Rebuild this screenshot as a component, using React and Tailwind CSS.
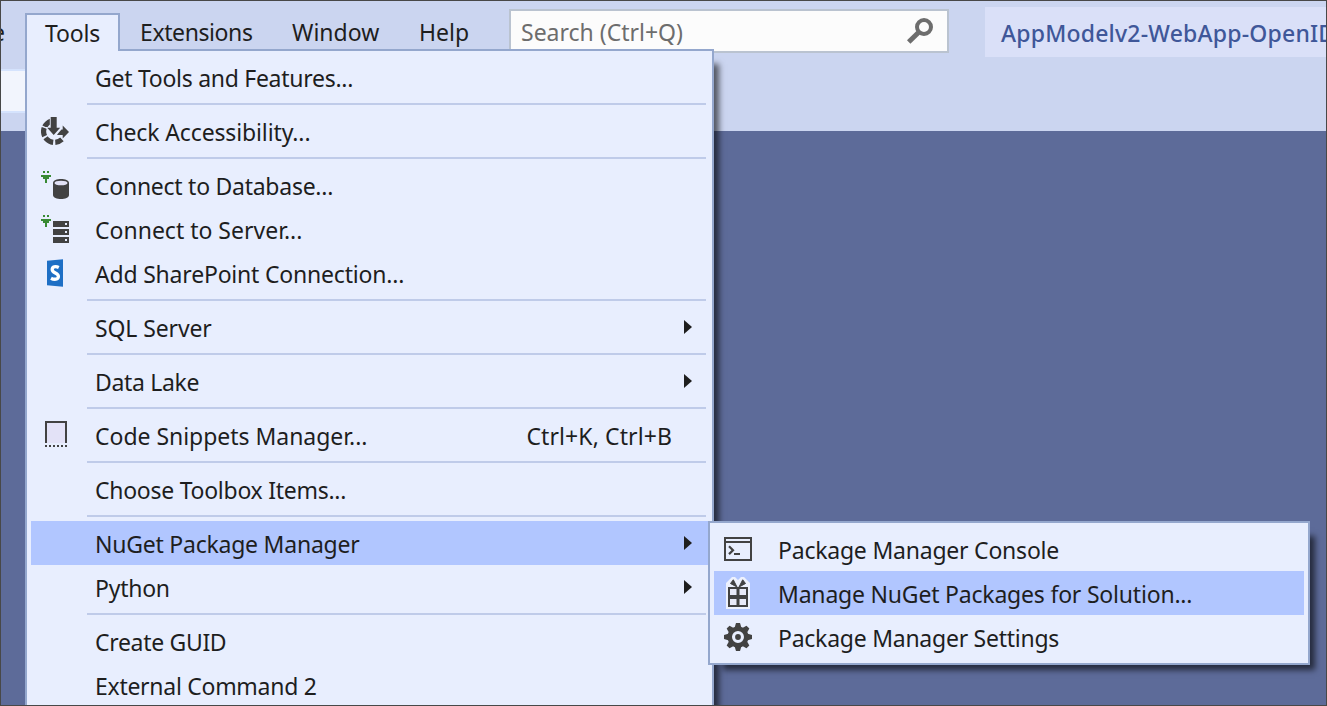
function Separator() {
  return <div className="ml-14 mr-0.5 my-1 h-0.5 shrink-0 bg-[#bfcbe9]" />;
}

function AccessibilityIcon() {
  return (
    <svg width="28" height="28" viewBox="0 0 28 28" fill="none">
      <circle cx="13.500" cy="14.500" r="10.900" stroke="#424242" strokeWidth="5.200" pathLength="360" strokeDasharray="39 11 48 10 44 7 44 157" transform="rotate(47 13.500 14.500)" />
      <path d="M17 16.500l3.500-4h1.200V8.500L28 15l-6.300 6.500V18H16z" fill="#424242" />
      <path d="M9.700 0h6v10.800h3.500L12.700 18 6.200 10.800h3.500z" fill="#424242" stroke="#e8eefe" strokeWidth="1.800" paintOrder="stroke" />
    </svg>
  );
}

function PlugMark() {
  return <path d="M2 0h2v2H2zM6 0h2v2H6zM0 4h10v2H8v2H6v4H4V8H2V6H0z" fill="#388a34" shapeRendering="crispEdges" />;
}

function DatabaseIcon() {
  return (
    <svg width="28" height="28" viewBox="0 0 28 28">
      <PlugMark />
      <path d="M12 12c0-5.300 16-5.300 16 0v12c0 5.300-16 5.300-16 0z" fill="#424242" />
      <ellipse cx="20" cy="12" rx="6.500" ry="2.300" fill="#e2e2f6" />
    </svg>
  );
}

function ServerIcon() {
  return (
    <svg width="28" height="28" viewBox="0 0 28 28" shapeRendering="crispEdges">
      <PlugMark />
      <path d="M12 6h16v6H12zM12 14h16v6H12zM12 22h16v6H12z" fill="#424242" />
      <path d="M24 8h2v2h-2zM24 16h2v2h-2zM24 24h2v2h-2z" fill="#e8eefe" />
    </svg>
  );
}

function SharePointIcon() {
  return (
    <svg width="28" height="28" viewBox="0 0 28 28">
      <path d="M6 1.800L22 .3v27.400L6 26.200z" fill="#1e6fc5" />
      <path d="M17.800 8.600c-3.400-1.700-6.600-.8-6.600 1.900 0 3.700 6.200 3.400 6.200 7 0 3-4.200 3.500-7.400 1.700" fill="none" stroke="#fff" strokeWidth="3.300" />
    </svg>
  );
}

function SnippetIcon() {
  return (
    <svg width="28" height="28" viewBox="0 0 28 28" shapeRendering="crispEdges">
      <path d="M6 2h18v20H6z" fill="#e3e2f7" />
      <path d="M4 0h22v22h-2V2H6v20H4z" fill="#424242" />
      <path d="M4 25h22" stroke="#424242" strokeWidth="2" strokeDasharray="2 2" />
    </svg>
  );
}

function ConsoleIcon() {
  return (
    <svg width="28" height="28" viewBox="0 0 28 28">
      <path d="M0 2h28v24H0zM2 4v2h24V4zM2 8v16h24V8z" fill="#424242" fillRule="evenodd" />
      <path d="M5 11.300l4 3.900-4 3.900" fill="none" stroke="#424242" strokeWidth="2.200" />
      <path d="M10 18h6v2h-6z" fill="#424242" />
    </svg>
  );
}

function GiftIcon() {
  return (
    <svg width="28" height="32" viewBox="0 0 28 32">
      <path d="M2 9V6l6-6h3l3 3 3-3h3l6 6v26H2z" fill="#edf1fd" />
      <path d="M4 10h20v20H4z" fill="#424242" />
      <path d="M6 12h6.500v6H6zM15.500 12H22v6h-6.500zM6 22h6.500v6H6zM15.500 22H22v6h-6.500z" fill="#e8eaf8" />
      <path d="M13 10L9.300 2.800 6.500 6.500zM15 10l3.700-7.200 2.800 3.700z" fill="#424242" stroke="#424242" />
    </svg>
  );
}

function GearIcon() {
  return (
    <svg width="28" height="28" viewBox="0 0 28 28" fill="#424242">
      <g transform="translate(14 14)">
        <path fillRule="evenodd" d="M0-10.500A10.500 10.500 0 1 1 0 10.500 10.500 10.500 0 1 1 0-10.500zM0-6A6 6 0 1 0 0 6 6 6 0 1 0 0-6z" />
        <circle r="2.900" />
        {[0, 45, 90, 135, 180, 225, 270, 315].map((a) => (
          <path key={a} d="M-3.500-9l1.500-5h4l1.500 5z" transform={`rotate(${a})`} />
        ))}
      </g>
    </svg>
  );
}

function SearchIcon() {
  return (
    <svg width="26" height="26" viewBox="0 0 26 26" fill="none" stroke="#6d6d6d">
      <circle cx="17" cy="9" r="7" strokeWidth="4" />
      <path d="M12 14L1.700 24" strokeWidth="5" />
    </svg>
  );
}

function MenuItem({ icon, label, tracking = "", shortcut, arrow, active }) {
  return (
    <div className={`flex h-11 shrink-0 items-center ${active ? "bg-[#b1c6ff]" : ""}`}>
      <div className="flex w-12 shrink-0 justify-center">{icon}</div>
      <span className={`ml-4 flex-1 pt-0.5 ${tracking}`}>{label}</span>
      {shortcut && <span className="mr-9 pt-0.5 tracking-[0.1px]">{shortcut}</span>}
      {arrow && (
        <svg className="mr-4 shrink-0" width="8" height="14" viewBox="0 0 8 14">
          <path d="M0 0l8 7-8 7z" fill="#1e1e1e" />
        </svg>
      )}
    </div>
  );
}

function Header() {
  return (
    <header className="h-[131px] bg-[#cbd5f0]">
      <div className="flex h-16 items-center">
        <div className="flex w-[25px] shrink-0">
          <span className="flex w-[5px] justify-end overflow-hidden">e</span>
        </div>
        <div className="relative z-10 flex h-[38px] w-[95px] shrink-0 items-center border-2 border-b-0 border-[#94a7cd] bg-[#e8eefe] pl-[18px] tracking-[-0.2px]">Tools</div>
        <span className="ml-5 w-[152px] shrink-0 tracking-[-0.4px]">Extensions</span>
        <span className="w-[127px] shrink-0">Window</span>
        <span className="w-[90px] shrink-0">Help</span>
        <div className="mb-0.5 flex h-11 w-[440px] shrink-0 items-center justify-between border-2 border-[#bac3d0] bg-[#fcfcfc] pl-2.5 pr-3.5 text-[#6d6d6d]">
          <span className="pt-0.5">Search (Ctrl+Q)</span>
          <SearchIcon />
        </div>
        <div className="ml-9 flex h-[50px] min-w-0 flex-1 items-center overflow-hidden bg-[#dae0f8] pl-4 pt-0.5 font-medium tracking-[0.2px] text-[#3f5799]">AppModelv2-WebApp-OpenID</div>
      </div>
      <div className="mt-[5px] h-11 w-[25px] border-y-2 border-[#d5e3fd] bg-[#f2f5fd]" />
    </header>
  );
}

export default function App() {
  return (
    <div className="relative h-[706px] w-[1327px] overflow-hidden whitespace-nowrap bg-[#5d6b99] font-['Noto_Sans',sans-serif] text-[23px] leading-8 text-[#1e1e1e]">
      <Header />
      <nav className="absolute left-[25px] top-[49px] flex h-[670px] w-[689px] flex-col border-2 border-[#94a7cd] bg-[#e8eefe] p-1 shadow-[10px_10px_6px_-5px_#0009]">
        <MenuItem label="Get Tools and Features..." tracking="tracking-[-0.28px]" />
        <Separator />
        <MenuItem icon={<AccessibilityIcon />} label="Check Accessibility..." tracking="tracking-[-0.13px]" />
        <Separator />
        <MenuItem icon={<DatabaseIcon />} label="Connect to Database..." tracking="tracking-[-0.26px]" />
        <MenuItem icon={<ServerIcon />} label="Connect to Server..." />
        <MenuItem icon={<SharePointIcon />} label="Add SharePoint Connection..." tracking="tracking-[-0.2px]" />
        <Separator />
        <MenuItem label="SQL Server" tracking="tracking-[-0.12px]" arrow />
        <Separator />
        <MenuItem label="Data Lake" tracking="tracking-[-0.32px]" arrow />
        <Separator />
        <MenuItem icon={<SnippetIcon />} label="Code Snippets Manager..." tracking="tracking-[-0.03px]" shortcut="Ctrl+K, Ctrl+B" />
        <Separator />
        <MenuItem label="Choose Toolbox Items..." tracking="tracking-[-0.27px]" />
        <Separator />
        <MenuItem label="NuGet Package Manager" tracking="tracking-[-0.23px]" arrow active />
        <MenuItem label="Python" tracking="tracking-[-0.25px]" arrow />
        <Separator />
        <MenuItem label="Create GUID" tracking="tracking-[-0.32px]" />
        <MenuItem label="External Command 2" tracking="tracking-[-0.28px]" />
      </nav>
      <div className="absolute left-[708px] top-[521px] flex w-[602px] flex-col border-2 border-[#94a7cd] bg-[#e8eefe] p-1 shadow-[10px_10px_6px_-5px_#0009]">
        <MenuItem icon={<ConsoleIcon />} label="Package Manager Console" tracking="tracking-[-0.22px]" />
        <MenuItem icon={<GiftIcon />} label="Manage NuGet Packages for Solution..." tracking="tracking-[-0.2px]" active />
        <MenuItem icon={<GearIcon />} label="Package Manager Settings" tracking="tracking-[-0.25px]" />
      </div>
      <div className="pointer-events-none absolute inset-0 z-20 border border-[#484848]" />
    </div>
  );
}
